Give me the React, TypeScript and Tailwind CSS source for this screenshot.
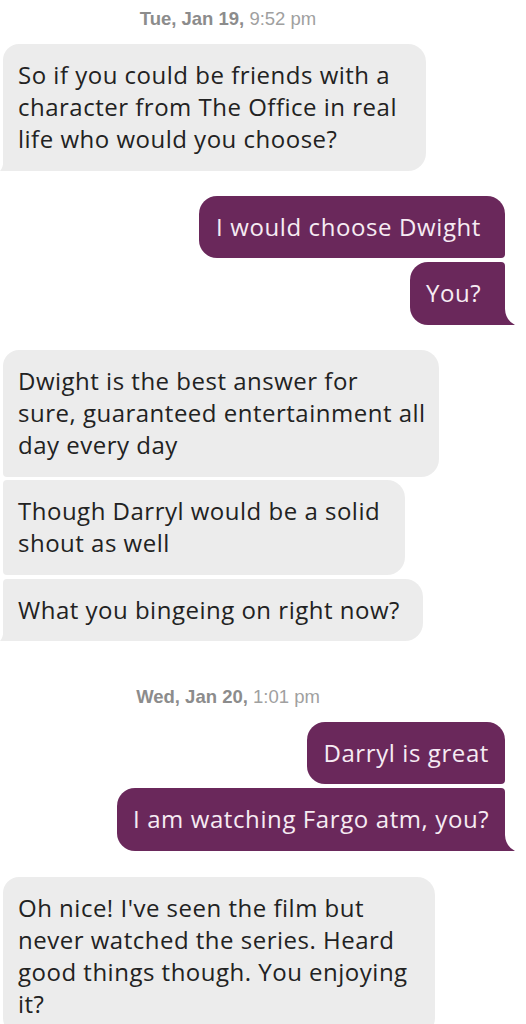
import React from "react";

const FONT = { fontFamily: "'Open Sans', 'Noto Sans', sans-serif" };

function TailRight() {
  return (
    <svg className="absolute bottom-0 right-[-10px]" width="11" height="16" viewBox="0 0 11 16">
      <path d="M0 0 L1 0 Q1.5 11 11 16 L0 16 Z" fill="#6a285b" />
    </svg>
  );
}

function TailLeft() {
  return (
    <svg className="absolute bottom-0 left-[-3px]" width="4" height="12" viewBox="0 0 4 12">
      <path d="M4 0 L4 12 L0 12 Q3 9 4 0 Z" fill="#ececec" />
    </svg>
  );
}

function Gray({ lines, w, cls, tail }: { lines: string[]; w: string; cls: string; tail?: boolean }) {
  return (
    <div className={`relative ml-[3px] bg-[#ececec] text-[#222222] px-[15px] py-[15px] text-[24px] leading-[32px] tracking-[0.5px] ${w} ${cls}`}>
      {lines.map((l, i) => (
        <div key={i} className="whitespace-nowrap">{l}</div>
      ))}
      {tail && <TailLeft />}
    </div>
  );
}

function Purple({ text, w, cls, tail }: { text: string; w: string; cls: string; tail?: boolean }) {
  return (
    <div className={`relative self-end mr-[21px] bg-[#6a285b] text-[#f6ebf3] pl-[16px] py-[15px] text-[24px] leading-[32px] tracking-[0.6px] whitespace-nowrap ${w} ${cls}`}>
      <div className="text-right">{text}</div>
      {tail && <TailRight />}
    </div>
  );
}

function Stamp({ day, time }: { day: string; time: string }) {
  return (
    <div className="mr-[70px] text-center text-[18.5px] leading-[24px]" style={{ fontFamily: "'Liberation Sans', Arial, sans-serif" }}>
      <span className="font-semibold text-[#8c8c8c]">{day}</span>
      <span className="text-[#a0a0a0]"> {time}</span>
    </div>
  );
}

export default function App() {
  return (
    <div className="w-[526px] h-[1024px] overflow-hidden bg-white flex flex-col" style={FONT}>
      <div className="pt-[7px]">
        <Stamp day="Tue, Jan 19," time="9:52 pm" />
      </div>
      <div className="mt-[13px] flex flex-col">
        <Gray
          lines={["So if you could be friends with a", "character from The Office in real", "life who would you choose?"]}
          w="w-[423px]"
          cls="rounded-tl-[16px] rounded-tr-[18px] rounded-br-[18px] rounded-bl-none h-[127px]"
          tail
        />
        <div className="mt-[25px]" />
        <Purple text="I would choose Dwight" w="w-[306px] pr-[24px]" cls="rounded-[18px] rounded-br-[4px] h-[62px]" />
        <div className="mt-[4px]" />
        <Purple text="You?" w="w-[95px] pr-[24px]" cls="rounded-tl-[18px] rounded-bl-[18px] rounded-tr-[4px] rounded-br-none h-[63px]" tail />
        <div className="mt-[25px]" />
        <Gray
          lines={["Dwight is the best answer for", "sure, guaranteed entertainment all", "day every day"]}
          w="w-[436px]"
          cls="rounded-tl-[16px] rounded-tr-[18px] rounded-br-[18px] rounded-bl-[4px] h-[127px]"
        />
        <div className="mt-[3px]" />
        <Gray
          lines={["Though Darryl would be a solid", "shout as well"]}
          w="w-[402px]"
          cls="rounded-tl-[4px] rounded-tr-[18px] rounded-br-[18px] rounded-bl-[4px] h-[95px]"
        />
        <div className="mt-[4px]" />
        <Gray
          lines={["What you bingeing on right now?"]}
          w="w-[420px]"
          cls="rounded-tl-[4px] rounded-tr-[18px] rounded-br-[18px] rounded-bl-none h-[62px]"
          tail
        />
        <div className="mt-[44px]" />
        <Stamp day="Wed, Jan 20," time="1:01 pm" />
        <div className="mt-[13px]" />
        <Purple text="Darryl is great" w="w-[198px] pr-[16px]" cls="rounded-[18px] rounded-br-[4px] h-[62px]" />
        <div className="mt-[4px]" />
        <Purple text="I am watching Fargo atm, you?" w="w-[388px] pr-[16px]" cls="rounded-tl-[18px] rounded-bl-[18px] rounded-tr-[4px] rounded-br-none h-[63px]" tail />
        <div className="mt-[26px]" />
        <Gray
          lines={["Oh nice! I've seen the film but", "never watched the series. Heard", "good things though. You enjoying", "it?"]}
          w="w-[432px]"
          cls="rounded-tl-[16px] rounded-tr-[18px] rounded-br-[18px] rounded-bl-[18px] h-[159px]"
        />
      </div>
    </div>
  );
}
